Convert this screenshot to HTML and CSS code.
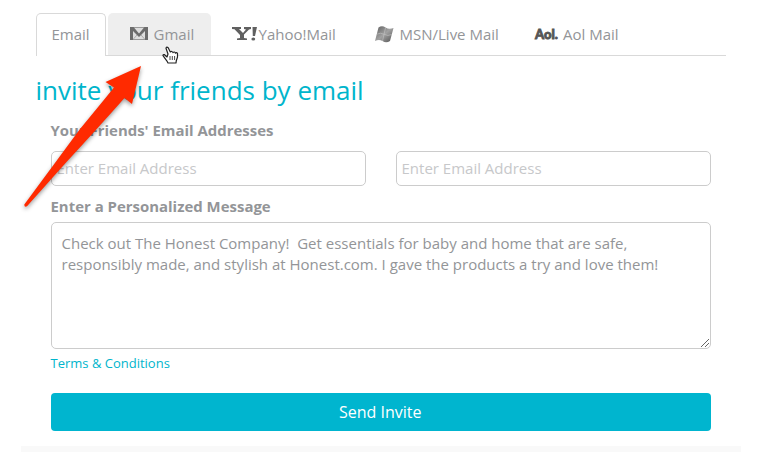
FILE: index.html
```html
<!DOCTYPE html>
<html lang="en">
<head>
<meta charset="utf-8">
<title>Invite your friends</title>
<link rel="stylesheet" href="styles.css">
</head>
<body>
<main class="page">
  <nav class="tabs">
    <a class="tab tab-email">Email</a>
    <a class="tab tab-gmail">
      <svg class="icon-gmail" width="18" height="13" viewBox="0 0 18 13">
        <path d="M0 0h18v13H0z" fill="#dedede"/>
        <path d="M3 12.500l4-4.500M15 12.500L11 8" stroke="#aaa"/>
        <path d="M3 .5h12M3 12.500h12" stroke="#999"/>
        <path d="M0 13V0h3.500L9 6.500 14.500 0H18v13h-3V4L9 10 3 4v9z" fill="#6c6c6c"/>
      </svg>
      <span>Gmail</span>
    </a>
    <a class="tab tab-yahoo">
      <svg class="icon-yahoo" width="25" height="15" viewBox="0 0 25 15">
        <path d="M0 0h9v2H7l4 4 3-3.500-2-.5V0h7v2l-2 .5-5 5V11l3 .5V13H5v-1.500L8 11V8L2.500 2.300 0 2z" fill="#606060"/>
        <path d="M20.500 0H25l-2 9h-2.200z" fill="#606060"/><ellipse cx="21.300" cy="12" rx="1.900" ry="1.600" fill="#606060"/>
      </svg>
      <span>Yahoo!Mail</span>
    </a>
    <a class="tab tab-msn">
      <svg class="icon-msn" width="19" height="17" viewBox="0 0 19 17">
        <defs><linearGradient id="flag" x2="1" y2="1"><stop stop-color="#5c5c5c"/><stop offset=".5" stop-color="#a2a2a2"/><stop offset="1" stop-color="#505050"/></linearGradient></defs>
        <path d="M3.500 1.500Q7-.8 10.500 1.500 14 3.800 18.500 2L15 15q-4 2.500-7.500 0Q4 12.800 0 15z" fill="url(#flag)"/>
        <path d="M10.600 1.500L7.500 15M1.800 8.200q4-2 7.300.1 3.700 2.200 7.600.2" fill="none" stroke="#c4c4c4" stroke-width=".6"/>
      </svg>
      <span>MSN/Live Mail</span>
    </a>
    <a class="tab tab-aol"><b class="aol-logo">Aol.</b><span>Aol Mail</span></a>
  </nav>
  <h1 class="title">invite your friends by email</h1>
  <form class="invite">
    <label class="label">Your Friends' Email Addresses</label>
    <div class="emails">
      <input class="field" type="text" placeholder="Enter Email Address">
      <input class="field" type="text" placeholder="Enter Email Address">
    </div>
    <label class="label label-message">Enter a Personalized Message</label>
    <div class="message-box">
      <div class="message">Check out The Honest Company!&nbsp; Get essentials for baby and home that are safe,<br>responsibly made, and stylish at Honest.com. I gave the products a try and love them!</div>
      <svg class="grip" width="8" height="8" viewBox="0 0 8 8"><path d="M0 8L8 0M4 8l4-4" stroke="#555" stroke-width=".9"/></svg>
    </div>
    <a class="terms">Terms &amp; Conditions</a>
    <button class="send" type="button">Send Invite</button>
  </form>
  <footer class="footer"></footer>
</main>
<svg class="arrow" width="761" height="452" viewBox="0 0 761 452">
  <path d="M141 66L105.500 82 114 87.500Q99 106 80 129L24.300 204.500Q24.300 207.700 27 206.300L66.500 162Q97 129 124.500 98L132 104z" fill="#ff2a00"/>
</svg>
<svg class="cursor" width="17" height="18" viewBox="0 0 17 18">
  <path d="M5 11L2.500 8.700Q.7 8.300 1 9.700L4.800 14.800 6 17h8l.3-2.300L15.500 11V7.500Q14.500 5.800 13.500 7.200 12.500 5.200 11 6.500 9.800 4.800 8.300 5.900L6.200 1.700Q4.500.3 4 2.200L6 8z" fill="#fff" stroke="#222" stroke-width="1.200" stroke-linejoin="round"/>
  <path d="M8 10v4M10.300 10v4M12.600 10v4" stroke="#333" stroke-width=".9"/>
</svg>
</body>
</html>
```
FILE: styles.css
```css
* { box-sizing: border-box; }
body {
  margin: 0;
  background: #fff;
  color: #939598;
  font-family: "Open Sans", sans-serif;
  font-size: 15px;
  height: 452px;
  overflow: hidden;
}
.page { padding: 13px 20px 0 21px; }
.tabs {
  display: flex;
  height: 43px;
  margin: 0 15px;
  border-bottom: 1px solid #d9d9d9;
}
.tab {
  display: flex;
  align-items: center;
  height: 42px;
  white-space: nowrap;
}
.tab svg { flex: none; }
.tab-email {
  width: 70px;
  height: 43px;
  padding: 0 0 2px 14.5px;
  margin-right: 2px;
  border: 1px solid #d9d9d9;
  border-bottom: 0;
  border-radius: 5px 5px 0 0;
  background: #fff;
}
.tab-gmail {
  width: 103px;
  padding-left: 22px;
  margin-right: 21px;
  border-radius: 5px 5px 0 0;
  background: #eee;
}
.icon-gmail { margin: 0 5.5px 1px 0; }
.tab-yahoo { width: 143px; }
.icon-yahoo { margin-right: 1.5px; }
.tab-msn { width: 160px; }
.icon-msn { margin-right: 5.5px; }
.aol-logo {
  width: 28px;
  color: #555;
  font: 900 13px/1 Lato, sans-serif;
  -webkit-text-stroke: .8px #555;
}
.title {
  margin: 16px 0 0 14.5px;
  color: #00b5cc;
  font-size: 26px;
  font-weight: 400;
  line-height: 36px;
}
.invite { margin: 0 30px; }
.label {
  display: block;
  margin: 12px 0 0 -.5px;
  font-weight: 700;
  font-size: 14.95px;
  line-height: 20px;
}
.emails {
  display: flex;
  gap: 30px;
  margin-top: 11px;
}
.field {
  flex: 1;
  min-width: 0;
  height: 35px;
  padding: 0 5px 2px 4.5px;
  border: 1px solid #ccc;
  border-radius: 5px;
  background: #fff;
  font: inherit;
}
.field::placeholder { color: #c7c8ca; opacity: 1; }
.label-message { margin-top: 10px; }
.message-box {
  position: relative;
  height: 127px;
  margin-top: 6px;
  padding: 10px 10px 10px 9.5px;
  border: 1px solid #ccc;
  border-radius: 5px;
}
.message { line-height: 21px; white-space: nowrap; }
.grip { position: absolute; right: 1px; bottom: 1px; }
.terms {
  display: block;
  margin: 4px 0 0 -.5px;
  color: #00b5cc;
  font-size: 13px;
  line-height: 20px;
}
.send {
  display: block;
  width: 100%;
  height: 38px;
  margin-top: 20px;
  padding: 0 1.5px 0 0;
  border: 0;
  border-radius: 4px;
  background: #00b5cf;
  color: #fff;
  font: 16px "Open Sans", sans-serif;
}
.footer { height: 6px; margin-top: 15px; background: #f9f9f9; }
.arrow {
  position: absolute;
  top: 0;
  left: 0;
  pointer-events: none;
  filter: drop-shadow(0 2px 2px rgba(0, 0, 0, .4));
}
.cursor { position: absolute; left: 162px; top: 46px; }
```
